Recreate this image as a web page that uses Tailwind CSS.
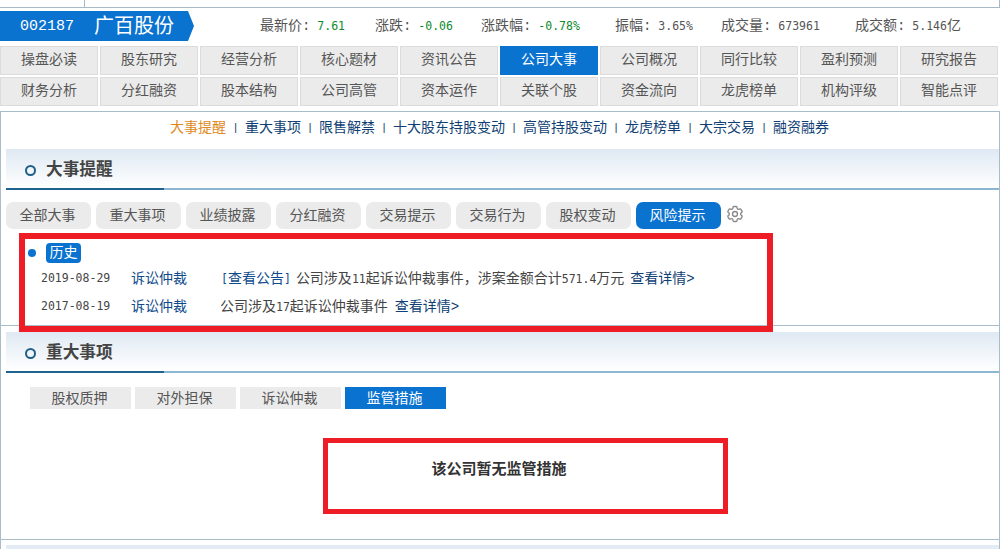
<!doctype html>
<html lang="zh-CN">
  <head>
    <meta charset="UTF-8" />
    <title>广百股份 公司大事</title>
    <script src="https://cdn.jsdelivr.net/npm/@tailwindcss/browser@4"></script>
  </head>
  <body class="bg-white">
    <div class="relative w-[1007px] h-[549px] overflow-hidden bg-white text-[14px] text-[#444] font-['Liberation_Mono','Noto_Sans_CJK_SC',monospace]">
      <!-- top strip -->
      <div class="h-[8px] w-[1000px] border-b border-r border-[#a9b8c6] flex">
        <div class="w-[85px] border-r border-[#a9b8c6]"></div>
      </div>

      <!-- stock header -->
      <div class="flex items-center h-[30px] mt-[3px]">
        <div class="relative w-[188px] h-[30px] pt-[3px] bg-[#0a72cf] text-white flex items-center pl-[20px]">
          <span class="text-[15px] w-[74px]">002187</span>
          <span class="text-[20px]">广百股份</span>
          <div class="absolute left-[188px] top-0 w-0 h-0 border-y-[15px] border-y-transparent border-l-[6px] border-l-[#0a72cf]"></div>
        </div>
        <div class="flex items-center ml-[72px] pt-[1px] text-[#555] h-[30px] whitespace-nowrap">
          <span class="w-[115px]">最新价:<span class="font-['DejaVu_Sans_Mono'] text-[11.5px] text-[#0b8a2e]"> 7.61</span></span>
          <span class="w-[106px]">涨跌:<span class="font-['DejaVu_Sans_Mono'] text-[11.5px] text-[#0b8a2e]"> -0.06</span></span>
          <span class="w-[134px]">涨跌幅:<span class="font-['DejaVu_Sans_Mono'] text-[11.5px] text-[#0b8a2e]"> -0.78%</span></span>
          <span class="w-[106px]">振幅:<span class="font-['DejaVu_Sans_Mono'] text-[11.5px]"> 3.65%</span></span>
          <span class="w-[134px]">成交量:<span class="font-['DejaVu_Sans_Mono'] text-[11.5px]"> 673961</span></span>
          <span>成交额:<span class="font-['DejaVu_Sans_Mono'] text-[11.5px]"> 5.146</span>亿</span>
        </div>
      </div>

      <!-- main tabs -->
      <div class="grid grid-cols-[repeat(10,98px)] gap-[2px] mt-[5px] w-[1000px] text-center leading-[27px] text-[#555]">
        <div class="h-[29px] bg-[#ebebeb] border border-[#dcdcdc]">操盘必读</div>
        <div class="h-[29px] bg-[#ebebeb] border border-[#dcdcdc]">股东研究</div>
        <div class="h-[29px] bg-[#ebebeb] border border-[#dcdcdc]">经营分析</div>
        <div class="h-[29px] bg-[#ebebeb] border border-[#dcdcdc]">核心题材</div>
        <div class="h-[29px] bg-[#ebebeb] border border-[#dcdcdc]">资讯公告</div>
        <div class="h-[29px] bg-[#0a72cf] border border-[#0a72cf] text-white">公司大事</div>
        <div class="h-[29px] bg-[#ebebeb] border border-[#dcdcdc]">公司概况</div>
        <div class="h-[29px] bg-[#ebebeb] border border-[#dcdcdc]">同行比较</div>
        <div class="h-[29px] bg-[#ebebeb] border border-[#dcdcdc]">盈利预测</div>
        <div class="h-[29px] bg-[#ebebeb] border border-[#dcdcdc]">研究报告</div>
        <div class="h-[29px] bg-[#ebebeb] border border-[#dcdcdc]">财务分析</div>
        <div class="h-[29px] bg-[#ebebeb] border border-[#dcdcdc]">分红融资</div>
        <div class="h-[29px] bg-[#ebebeb] border border-[#dcdcdc]">股本结构</div>
        <div class="h-[29px] bg-[#ebebeb] border border-[#dcdcdc]">公司高管</div>
        <div class="h-[29px] bg-[#ebebeb] border border-[#dcdcdc]">资本运作</div>
        <div class="h-[29px] bg-[#ebebeb] border border-[#dcdcdc]">关联个股</div>
        <div class="h-[29px] bg-[#ebebeb] border border-[#dcdcdc]">资金流向</div>
        <div class="h-[29px] bg-[#ebebeb] border border-[#dcdcdc]">龙虎榜单</div>
        <div class="h-[29px] bg-[#ebebeb] border border-[#dcdcdc]">机构评级</div>
        <div class="h-[29px] bg-[#ebebeb] border border-[#dcdcdc]">智能点评</div>
      </div>

      <!-- content panel -->
      <div class="mt-[5px] w-[1000px] h-[460px] border-t border-x border-[#a9bcc9]">
        <div class="flex items-center h-[30px] pl-[169px] pt-[2px] text-[#0f3f74] whitespace-nowrap">
          <span class="text-[#e08a1e]">大事提醒</span><span class="w-[19px] text-center text-[11px]">|</span><span>重大事项</span><span class="w-[18px] text-center text-[11px]">|</span><span>限售解禁</span><span class="w-[18px] text-center text-[11px]">|</span><span>十大股东持股变动</span><span class="w-[18px] text-center text-[11px]">|</span><span>高管持股变动</span><span class="w-[18px] text-center text-[11px]">|</span><span>龙虎榜单</span><span class="w-[18px] text-center text-[11px]">|</span><span>大宗交易</span><span class="w-[18px] text-center text-[11px]">|</span><span>融资融券</span>
        </div>

        <!-- section: 大事提醒 -->
        <div class="ml-[5px] mt-[7px] h-[41px] pt-[4px] bg-gradient-to-b from-[#dfe9f3] to-white border-b-2 border-[#8db6d0] relative flex items-center pl-[19px]">
          <div class="w-[11px] h-[11px] rounded-full border-2 border-[#1f5f86]"></div>
          <span class="ml-[10px] text-[16.7px] font-bold text-[#444]">大事提醒</span>
          <div class="absolute left-0 -bottom-[2px] w-[158px] h-[2px] bg-[#1d6390]"></div>
        </div>
        <div class="flex items-center gap-[5px] ml-[5px] mt-[11px] h-[28px] text-[#555]">
          <div class="w-[85px] h-[27px] pr-[2px] rounded-[7px] bg-[#ebebeb] text-center leading-[28px]">全部大事</div>
          <div class="w-[85px] h-[27px] pr-[2px] rounded-[7px] bg-[#ebebeb] text-center leading-[28px]">重大事项</div>
          <div class="w-[85px] h-[27px] pr-[2px] rounded-[7px] bg-[#ebebeb] text-center leading-[28px]">业绩披露</div>
          <div class="w-[85px] h-[27px] pr-[2px] rounded-[7px] bg-[#ebebeb] text-center leading-[28px]">分红融资</div>
          <div class="w-[85px] h-[27px] pr-[2px] rounded-[7px] bg-[#ebebeb] text-center leading-[28px]">交易提示</div>
          <div class="w-[85px] h-[27px] pr-[2px] rounded-[7px] bg-[#ebebeb] text-center leading-[28px]">交易行为</div>
          <div class="w-[85px] h-[27px] pr-[2px] rounded-[7px] bg-[#ebebeb] text-center leading-[28px]">股权变动</div>
          <div class="w-[85px] h-[27px] pr-[2px] rounded-[7px] bg-[#0a72cf] text-white text-center leading-[28px]">风险提示</div>
          <svg class="-mt-[2px] -ml-[1px]" width="20" height="20" viewBox="0 0 24 24" fill="none" stroke="#8a8a8a" stroke-width="1.6">
            <path d="M9.594 3.94c.09-.542.56-.94 1.11-.94h2.593c.55 0 1.02.398 1.11.94l.213 1.281c.063.374.313.686.645.87.074.04.147.083.22.127.325.196.72.257 1.075.124l1.217-.456a1.125 1.125 0 0 1 1.37.49l1.296 2.247a1.125 1.125 0 0 1-.26 1.431l-1.003.827c-.293.241-.438.613-.43.992a7.723 7.723 0 0 1 0 .255c-.008.378.137.75.43.991l1.004.827c.424.35.534.955.26 1.43l-1.298 2.247a1.125 1.125 0 0 1-1.369.491l-1.217-.456c-.355-.133-.75-.072-1.076.124a6.47 6.47 0 0 1-.22.128c-.331.183-.581.495-.644.869l-.213 1.281c-.09.543-.56.94-1.11.94h-2.594c-.55 0-1.019-.398-1.11-.94l-.213-1.281c-.062-.374-.312-.686-.644-.87a6.52 6.52 0 0 1-.22-.127c-.325-.196-.72-.257-1.076-.124l-1.217.456a1.125 1.125 0 0 1-1.369-.49l-1.297-2.247a1.125 1.125 0 0 1 .26-1.431l1.004-.827c.292-.24.437-.613.43-.991a6.932 6.932 0 0 1 0-.255c.007-.38-.138-.751-.43-.992l-1.004-.827a1.125 1.125 0 0 1-.26-1.43l1.297-2.247a1.125 1.125 0 0 1 1.37-.491l1.216.456c.356.133.751.072 1.076-.124.072-.044.146-.086.22-.128.332-.183.582-.495.644-.869l.214-1.28Z" />
            <circle cx="12" cy="12" r="3" />
          </svg>
        </div>

        <!-- history list -->
        <div class="h-[97px] border-b border-[#a9bcc9] relative">
          <div class="flex items-center pl-[27px] pt-[14px]">
            <div class="w-[8px] h-[8px] rounded-full bg-[#0a72cf]"></div>
            <div class="ml-[10px] w-[35px] h-[20px] rounded-[4px] bg-[#0a72cf] text-white text-center leading-[20px]">历史</div>
          </div>
          <div class="flex items-center h-[28px] pl-[40px] mt-[2px] whitespace-nowrap">
            <span class="w-[90px] font-['DejaVu_Sans_Mono'] text-[11.5px]">2019-08-29</span>
            <span class="w-[90px] text-[#0f4a8a]">诉讼仲裁</span>
            <span class="text-[#0f4a8a]"><span class="font-['DejaVu_Sans_Mono'] text-[11.5px]">[</span>查看公告<span class="font-['DejaVu_Sans_Mono'] text-[11.5px]">]</span></span>
            <span class="ml-[5px]">公司涉及<span class="font-['DejaVu_Sans_Mono'] text-[11.5px]">11</span>起诉讼仲裁事件，涉案金额合计<span class="font-['DejaVu_Sans_Mono'] text-[11.5px]">571.4</span>万元</span>
            <span class="ml-[6px] text-[#0f3f74]">查看详情&gt;</span>
          </div>
          <div class="flex items-center h-[28px] pl-[40px] whitespace-nowrap">
            <span class="w-[90px] font-['DejaVu_Sans_Mono'] text-[11.5px]">2017-08-19</span>
            <span class="w-[89px] text-[#0f4a8a]">诉讼仲裁</span>
            <span>公司涉及<span class="font-['DejaVu_Sans_Mono'] text-[11.5px]">17</span>起诉讼仲裁事件</span>
            <span class="ml-[7px] text-[#0f3f74]">查看详情&gt;</span>
          </div>
        </div>

        <!-- section: 重大事项 -->
        <div class="ml-[5px] mt-[6px] h-[41px] pt-[4px] bg-gradient-to-b from-[#dfe9f3] to-white border-b-2 border-[#8db6d0] relative flex items-center pl-[19px]">
          <div class="w-[11px] h-[11px] rounded-full border-2 border-[#1f5f86]"></div>
          <span class="ml-[10px] text-[16.7px] font-bold text-[#444]">重大事项</span>
          <div class="absolute left-0 -bottom-[2px] w-[158px] h-[2px] bg-[#1d6390]"></div>
        </div>
        <div class="flex gap-[4px] ml-[29px] mt-[14px] text-[#555] text-center leading-[24px]">
          <div class="w-[101px] h-[22px] pr-[2px] bg-[#ebebeb]">股权质押</div>
          <div class="w-[101px] h-[22px] pr-[2px] bg-[#ebebeb]">对外担保</div>
          <div class="w-[101px] h-[22px] pr-[2px] bg-[#ebebeb]">诉讼仲裁</div>
          <div class="w-[101px] h-[22px] pr-[2px] bg-[#0a72cf] text-white">监管措施</div>
        </div>
        <div class="h-[131px] border-b border-[#a9bcc9] pt-[51px] pr-[2px] text-center text-[15px] font-bold text-[#333]">该公司暂无监管措施</div>
        <div class="ml-[5px] mt-[5px] h-[10px] bg-[#e3ebf4]"></div>
      </div>

      <!-- red annotation boxes -->
      <div class="absolute left-[19px] top-[233px] w-[754px] h-[99px] border-[6px] border-[#ee1c25]"></div>
      <div class="absolute left-[323px] top-[438px] w-[405px] h-[76px] border-[5px] border-[#ee1c25]"></div>
    </div>
  </body>
</html>
